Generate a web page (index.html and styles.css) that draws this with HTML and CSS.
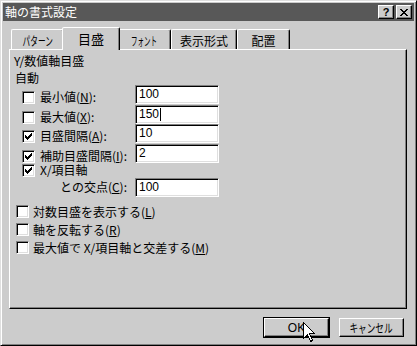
FILE: index.html
```html
<!DOCTYPE html>
<html lang="ja">
<head>
    <meta charset="UTF-8">
    <title>軸の書式設定</title>
    <link rel="stylesheet" href="styles.css">
</head>
<body>
    <div class="window">
        <div class="titlebar">
            <span class="title">軸の書式設定</span>
            <span class="tbtn help">?</span>
            <span class="tbtn close">
                <svg width="8" height="7" viewBox="0 0 8 7" shape-rendering="crispEdges"><path d="M0 0h2v1h-2zM6 0h2v1h-2zM1 1h2v1h-2zM5 1h2v1h-2zM2 2h4v1h-4zM3 3h2v1h-2zM2 4h4v1h-4zM1 5h2v1h-2zM5 5h2v1h-2zM0 6h2v1h-2zM6 6h2v1h-2z" fill="#000"/></svg>
            </span>
        </div>

        <div class="tabs">
            <div class="tab w-pattern"><span class="narrow n-pattern">パターン</span></div>
            <div class="tab selected w-scale">目盛</div>
            <div class="tab w-font"><span class="narrow n-font">フォント</span></div>
            <div class="tab w-format">表示形式</div>
            <div class="tab w-align">配置</div>
        </div>

        <div class="panel">
            <div class="group-title">Y/数値軸目盛</div>
            <div class="auto">自動</div>

            <div class="row">
                <div class="row-label"><span class="check"></span><span class="label">最小値(<u>N</u>):</span></div>
                <div class="field">100</div>
            </div>
            <div class="row tight">
                <div class="row-label"><span class="check"></span><span class="label">最大値(<u>X</u>):</span></div>
                <div class="field">150<span class="caret"></span></div>
            </div>
            <div class="row">
                <div class="row-label"><span class="check checked"><svg width="7" height="7" viewBox="0 0 7 7" shape-rendering="crispEdges"><path d="M6 0h1v3h-1zM5 1h1v3h-1zM4 2h1v3h-1zM3 3h1v3h-1zM2 4h1v3h-1zM1 3h1v3h-1zM0 2h1v3h-1z" fill="#000"/></svg></span><span class="label">目盛間隔(<u>A</u>):</span></div>
                <div class="field">10</div>
            </div>
            <div class="row">
                <div class="row-label"><span class="check checked"><svg width="7" height="7" viewBox="0 0 7 7" shape-rendering="crispEdges"><path d="M6 0h1v3h-1zM5 1h1v3h-1zM4 2h1v3h-1zM3 3h1v3h-1zM2 4h1v3h-1zM1 3h1v3h-1zM0 2h1v3h-1z" fill="#000"/></svg></span><span class="label">補助目盛間隔(<u>I</u>):</span></div>
                <div class="field">2</div>
            </div>
            <div class="row short">
                <div class="row-label"><span class="check checked"><svg width="7" height="7" viewBox="0 0 7 7" shape-rendering="crispEdges"><path d="M6 0h1v3h-1zM5 1h1v3h-1zM4 2h1v3h-1zM3 3h1v3h-1zM2 4h1v3h-1zM1 3h1v3h-1zM0 2h1v3h-1z" fill="#000"/></svg></span><span class="label">X/項目軸</span></div>
            </div>
            <div class="row cross">
                <div class="row-label indent"><span class="label">との交点(<u>C</u>):</span></div>
                <div class="field">100</div>
            </div>

            <div class="options">
                <div class="option"><span class="check"></span><span class="label">対数目盛を表示する(<u>L</u>)</span></div>
                <div class="option"><span class="check"></span><span class="label">軸を反転する(<u>R</u>)</span></div>
                <div class="option"><span class="check"></span><span class="label">最大値で X/項目軸と交差する(<u>M</u>)</span></div>
            </div>
        </div>

        <div class="footer">
            <div class="button default">OK</div>
            <div class="button"><span class="narrow n-cancel">キャンセル</span></div>
        </div>

        <!-- mouse pointer over the OK button -->
        <svg class="pointer" width="12" height="20" viewBox="0 0 12 20" shape-rendering="crispEdges">
            <path d="M0.5 0.5 L0.5 16.5 L4.5 12.5 L7.5 19.5 L9.5 18.5 L6.5 11.5 L11.5 11.5 Z" fill="#fff" stroke="#000" stroke-width="1"/>
        </svg>
    </div>
</body>
</html>
```

FILE: styles.css
```css
body {
    margin: 0;
    background: #cccccc;
    font-family: "Noto Sans CJK JP", "Noto Sans", sans-serif;
    font-size: 12px;
    color: #000;
}
.window {
    position: relative;
    width: 417px;
    height: 346px;
    box-sizing: border-box;
    background: #cccccc;
    border: 1px solid;
    border-color: #dfdfdf #000 #000 #dfdfdf;
    box-shadow: inset 1px 1px #fff, inset -1px -1px #808080;
    padding: 2px;
}
.titlebar {
    height: 18px;
    background: #585858;
    color: #fff;
    display: flex;
    align-items: center;
    padding: 0 2px;
}
.title {
    flex: 1;
    line-height: 18px;
    font-size: 12px;
}
.tbtn {
    width: 16px;
    height: 14px;
    box-sizing: border-box;
    background: #cccccc;
    border: 1px solid;
    border-color: #fff #000 #000 #fff;
    box-shadow: inset -1px -1px #808080;
    display: flex;
    align-items: center;
    justify-content: center;
    color: #000;
}
.help {
    margin-right: 2px;
    font-family: "Liberation Sans", Arial, sans-serif;
    font-weight: bold;
    font-size: 11px;
    line-height: 12px;
}
/* half-width katakana look */
.narrow {
    display: inline-block;
    white-space: nowrap;
}
.n-pattern { transform: scaleX(0.64); }
.n-font { transform: scaleX(0.54); }
.n-cancel { transform: scaleX(0.72); }
.tabs {
    height: 28px;
    display: flex;
    align-items: flex-end;
    padding-left: 8px;
}
.tab {
    height: 20px;
    box-sizing: border-box;
    border: 1px solid;
    border-bottom: none;
    border-color: #fff #000 transparent #fff;
    border-radius: 2px 2px 0 0;
    box-shadow: inset -1px 0 #808080;
    display: flex;
    align-items: center;
    justify-content: center;
    padding-top: 1px;
}
.tab.selected {
    position: relative;
    z-index: 1;
    height: 23px;
    margin: 0 -2px -1px;
    background: #cccccc;
    font-size: 13px;
    padding-bottom: 2px;
}
.w-pattern { width: 53px; }
.w-scale { width: 58px; }
.w-font { width: 53px; }
.w-format { width: 66px; }
.w-align { width: 53px; }
.panel {
    margin-left: 6px;
    width: 398px;
    height: 260px;
    box-sizing: border-box;
    border: 1px solid;
    border-color: #fff #000 #000 #fff;
    box-shadow: inset -1px -1px #808080;
    padding: 3px 0 0 4px;
}
.group-title {
    line-height: 16px;
}
.auto {
    margin-top: 2px;
    margin-left: 1px;
    line-height: 14px;
}
.row {
    height: 19px;
    margin-bottom: 1px;
    display: flex;
    align-items: flex-end;
    padding-left: 8px;
}
.row.tight {
    margin-bottom: 0;
}
.row.short {
    height: 13px;
    margin-bottom: 0;
}
.row.cross {
    height: 20px;
}
.row-label {
    width: 113px;
    display: flex;
    align-items: flex-end;
}
.row-label .label {
    margin-bottom: 1px;
}
.row-label.indent {
    padding-left: 38px;
    box-sizing: border-box;
    align-self: center;
}
.label {
    line-height: 13px;
    white-space: nowrap;
}
.check {
    width: 13px;
    height: 13px;
    box-sizing: border-box;
    flex-shrink: 0;
    background: #fff;
    border: 1px solid;
    border-color: #808080 #fff #fff #808080;
    box-shadow: inset 1px 1px #000, inset -1px -1px #dfdfdf;
    margin-right: 5px;
    display: flex;
    align-items: center;
    justify-content: center;
}
.field {
    width: 84px;
    height: 19px;
    box-sizing: border-box;
    background: #fff;
    border: 1px solid;
    border-color: #808080 #fff #fff #808080;
    box-shadow: inset 1px 1px #000, inset -1px -1px #dfdfdf;
    padding-left: 3px;
    line-height: 17px;
    font-family: "Liberation Sans", Arial, sans-serif;
    font-size: 12px;
    display: flex;
    align-items: center;
}
.caret {
    width: 1px;
    height: 13px;
    background: #000;
    margin-left: 1px;
}
.options {
    margin-top: 8px;
    padding-left: 2px;
}
.option {
    height: 18px;
    display: flex;
    align-items: flex-start;
}
.option .check {
    margin-right: 4px;
}
.footer {
    margin-top: 9px;
    display: flex;
    justify-content: flex-end;
    gap: 10px;
    padding-right: 10px;
}
.button {
    width: 65px;
    height: 19px;
    box-sizing: border-box;
    border: 1px solid;
    border-color: #fff #000 #000 #fff;
    box-shadow: inset -1px -1px #808080;
    display: flex;
    align-items: center;
    justify-content: center;
    font-size: 12px;
}
.button.default {
    outline: 1px solid #000;
    font-family: "Liberation Sans", Arial, sans-serif;
}
.pointer {
    position: absolute;
    left: 302px;
    top: 321px;
}
```
